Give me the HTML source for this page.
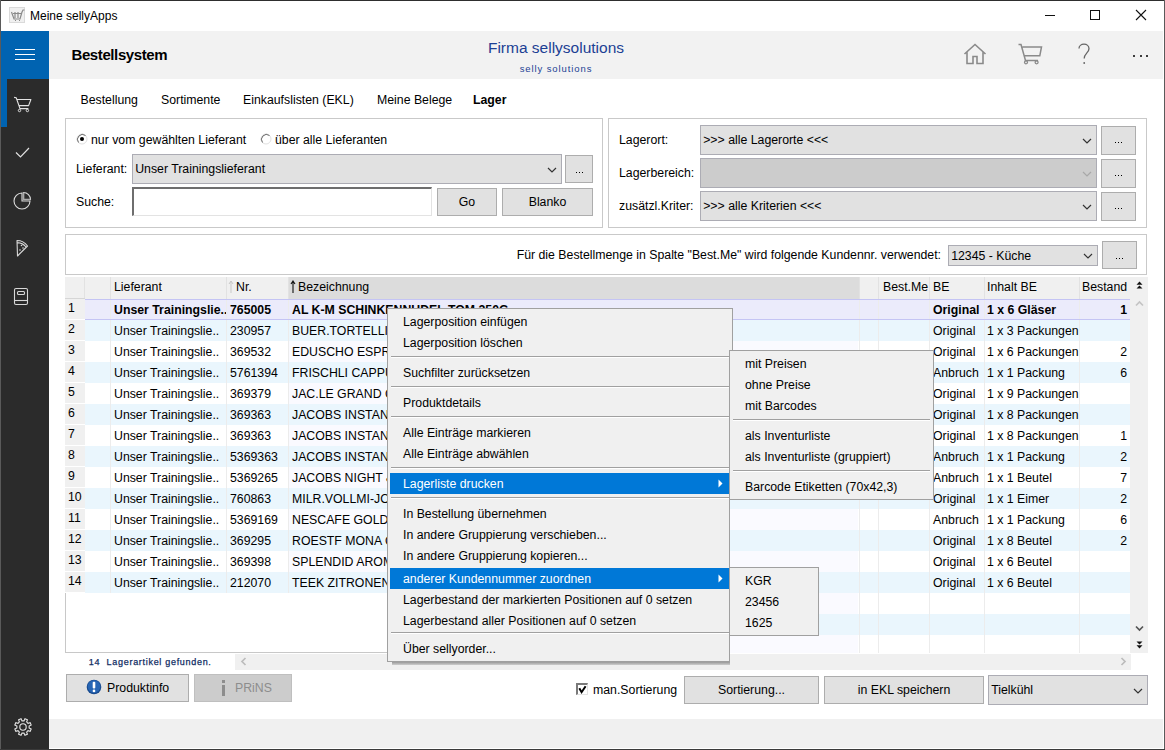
<!DOCTYPE html>
<html><head><meta charset="utf-8"><style>
html,body{margin:0;padding:0;}
body{width:1165px;height:750px;overflow:hidden;position:relative;font-family:"Liberation Sans",sans-serif;font-size:12.3px;color:#000;}
div{position:absolute;}
.t{white-space:nowrap;}
svg{overflow:visible}
</style></head><body>
<div style="left:0px;top:0px;width:1165px;height:750px;background:#ffffff"></div>
<div style="left:1px;top:31px;width:48px;height:719px;background:#2b2b2b"></div>
<div style="left:1px;top:31px;width:48px;height:48px;background:#0063b1"></div>
<div style="left:1px;top:79px;width:6px;height:48px;background:#0063b1"></div>
<div style="left:49px;top:31px;width:1114px;height:48px;background:#f2f2f2"></div>
<div style="left:49px;top:719px;width:1114px;height:29px;background:#f0f0f0"></div>
<div style="left:0px;top:0px;width:1165px;height:1px;background:#2e2e2e"></div>
<div style="left:0px;top:0px;width:1px;height:750px;background:#5a5a5a"></div>
<div style="left:1164px;top:0px;width:1px;height:750px;background:#5a5a5a"></div>
<div style="left:0px;top:749px;width:1165px;height:1px;background:#3a3a3a"></div>
<div style="left:9px;top:7px;width:16px;height:16px;background:#f0f0f0;border:1px solid #dadada;box-sizing:border-box"></div>
<svg style="position:absolute;left:9px;top:7px" width="16" height="16" viewBox="0 0 16 16" ><path d="M2.5 5 L5 12 H11 L13 5 M4 6.5 H12.5 M6 5v6 M9 5v6 M13 5 L14 3 H15.5 M6 13.5h1 M10 13.5h1" stroke="#8a8a8a" stroke-width="1.2" fill="none"/></svg>
<div class="t" style="left:30px;top:5.84px;height:20px;line-height:20px;font-size:12px;">Meine sellyApps</div>
<div style="left:1045px;top:15px;width:10px;height:1px;background:#111"></div>
<div style="left:1090px;top:10px;width:10px;height:10px;border:1px solid #111;box-sizing:border-box"></div>
<svg style="position:absolute;left:1135px;top:9px" width="12" height="12" viewBox="0 0 12 12" ><path d="M1 1L11 11M11 1L1 11" stroke="#111" stroke-width="1.1"/></svg>
<div style="left:15px;top:49px;width:20px;height:1px;background:#fff"></div>
<div style="left:15px;top:54px;width:20px;height:1px;background:#fff"></div>
<div style="left:15px;top:59px;width:20px;height:1px;background:#fff"></div>
<svg style="position:absolute;left:12px;top:94px" width="22" height="18" viewBox="0 0 22 18" ><path d="M2.1 3.4L4.2 3.8L8 14.6H16.4 M5.1 5.5H18.9L16.6 11.6H7" stroke="#e4e4e4" stroke-width="1.1" fill="none" stroke-linejoin="round"/><circle cx="7.5" cy="16.5" r="1.2" stroke="#e4e4e4" stroke-width="1" fill="none"/><circle cx="15.4" cy="16.5" r="1.2" stroke="#e4e4e4" stroke-width="1" fill="none"/></svg>
<svg style="position:absolute;left:15px;top:147px" width="16" height="12" viewBox="0 0 16 12" ><path d="M1 5.5L5.5 10L14 1" stroke="#e0e0e0" stroke-width="1.2" fill="none"/></svg>
<svg style="position:absolute;left:12px;top:189px" width="22" height="22" viewBox="0 0 22 22" ><path d="M10 4A8 8 0 1 0 18 12H10Z" stroke="#dcdcdc" stroke-width="1.1" fill="none"/><path d="M11.5 3.5A7 7 0 0 1 18.5 10.5H11.5Z" stroke="#dcdcdc" stroke-width="1.1" fill="none"/><path d="M11.5 3.5V10.5H18.5" stroke="#aaa" stroke-width="1.6" fill="none"/></svg>
<svg style="position:absolute;left:14px;top:239px" width="18" height="20" viewBox="0 0 18 20" ><path d="M3 1.5C7.5 1.5 11 3.5 13.5 7L3.5 17Z M3.3 3.6C7 3.8 10 5.3 12 8" stroke="#d8d8d8" stroke-width="1.1" fill="none" stroke-linejoin="round"/><circle cx="7.5" cy="6.5" r="0.8" fill="#d8d8d8"/><circle cx="6" cy="11" r="0.8" fill="#d8d8d8"/><circle cx="9" cy="9" r="0.8" fill="#d8d8d8"/></svg>
<svg style="position:absolute;left:13px;top:287px" width="16" height="20" viewBox="0 0 16 20" ><rect x="1.5" y="1.5" width="13" height="16" rx="1.5" stroke="#d8d8d8" stroke-width="1.1" fill="none"/><path d="M1.5 13.5H14.5" stroke="#d8d8d8" stroke-width="1.1"/><rect x="4.5" y="4.5" width="7" height="3" rx="1" stroke="#d8d8d8" stroke-width="1.1" fill="none"/></svg>
<svg style="position:absolute;left:11.5px;top:715.5px" width="22" height="22" viewBox="0 0 22 22" ><g transform="translate(11,11)" stroke="#e6e6e6" stroke-width="1.1" fill="none"><path d="M6.12 0.97 L8.17 1.96 L7.16 4.39 L5.02 3.64 L3.64 5.02 L4.39 7.16 L1.96 8.17 L0.97 6.12 L-0.97 6.12 L-1.96 8.17 L-4.39 7.16 L-3.64 5.02 L-5.02 3.64 L-7.16 4.39 L-8.17 1.96 L-6.12 0.97 L-6.12 -0.97 L-8.17 -1.96 L-7.16 -4.39 L-5.02 -3.64 L-3.64 -5.02 L-4.39 -7.16 L-1.96 -8.17 L-0.97 -6.12 L0.97 -6.12 L1.96 -8.17 L4.39 -7.16 L3.64 -5.02 L5.02 -3.64 L7.16 -4.39 L8.17 -1.96 L6.12 -0.97Z"/><circle r="3.2"/></g></svg>
<div class="t" style="left:71.5px;top:44.80px;height:20px;line-height:20px;font-size:15px;font-weight:bold;letter-spacing:-0.4px">Bestellsystem</div>
<div class="t" style="left:400px;width:312px;top:37.63px;height:20px;line-height:20px;font-size:15.5px;text-align:center;color:#1c3f94">Firma sellysolutions</div>
<div class="t" style="left:400px;width:312px;top:58.71px;height:20px;line-height:20px;font-size:9.5px;text-align:center;color:#1c3f94;letter-spacing:0.9px">selly solutions</div>
<svg style="position:absolute;left:963px;top:43px" width="24" height="22" viewBox="0 0 24 22" ><path d="M1.5 11L12 1.5L22.5 11 M4 8.5V20.5H10V13.5H14V20.5H20V8.5" stroke="#8a8a8a" stroke-width="1.6" fill="none"/></svg>
<svg style="position:absolute;left:1017px;top:43px" width="26" height="22" viewBox="0 0 26 22" ><path d="M1.5 1.5H4L8.5 17.5H21 M5.5 4H24.5L22.8 12.8H7.8" stroke="#8a8a8a" stroke-width="1.5" fill="none"/><circle cx="9" cy="19.3" r="1.5" stroke="#8a8a8a" stroke-width="1.3" fill="none"/><circle cx="19.6" cy="19.3" r="1.5" stroke="#8a8a8a" stroke-width="1.3" fill="none"/></svg>
<svg style="position:absolute;left:1077px;top:43px" width="14" height="22" viewBox="0 0 14 22" ><path d="M2 5.5C2 3 4.2 1.2 7 1.2C9.8 1.2 12 3 12 5.8C12 9.5 7.2 10.5 7.2 15.5" stroke="#666" stroke-width="1.3" fill="none"/><circle cx="7.2" cy="20" r="0.9" fill="#666"/></svg>
<div style="left:1133px;top:55.4px;width:2px;height:2px;background:#000;border-radius:1px"></div>
<div style="left:1139.5px;top:55.4px;width:2px;height:2px;background:#000;border-radius:1px"></div>
<div style="left:1146px;top:55.4px;width:2px;height:2px;background:#000;border-radius:1px"></div>
<div class="t" style="left:80.5px;top:89.74px;height:20px;line-height:20px;font-size:12.3px;">Bestellung</div>
<div class="t" style="left:161px;top:89.74px;height:20px;line-height:20px;font-size:12.3px;">Sortimente</div>
<div class="t" style="left:243px;top:89.74px;height:20px;line-height:20px;font-size:12.3px;">Einkaufslisten (EKL)</div>
<div class="t" style="left:377px;top:89.74px;height:20px;line-height:20px;font-size:12.3px;">Meine Belege</div>
<div class="t" style="left:473px;top:89.74px;height:20px;line-height:20px;font-size:12.3px;font-weight:bold">Lager</div>
<div style="left:65px;top:118px;width:538px;height:110px;border:1px solid #c9c9c9;box-sizing:border-box"></div>
<svg style="position:absolute;left:76px;top:133px" width="12" height="12" viewBox="0 0 12 12" ><circle cx="6" cy="6" r="5" fill="#fff" stroke="#e0e0e0" stroke-width="1"/><path d="M9.5 2.5A5 5 0 0 0 2.5 9.5" stroke="#6a6a6a" stroke-width="1" fill="none"/><circle cx="6" cy="6" r="2" fill="#000"/></svg>
<div class="t" style="left:91px;top:129.74px;height:20px;line-height:20px;font-size:12.3px;">nur vom gewählten Lieferant</div>
<svg style="position:absolute;left:260px;top:133px" width="12" height="12" viewBox="0 0 12 12" ><circle cx="6" cy="6" r="5" fill="#fff" stroke="#e0e0e0" stroke-width="1"/><path d="M9.5 2.5A5 5 0 0 0 2.5 9.5" stroke="#6a6a6a" stroke-width="1" fill="none"/></svg>
<div class="t" style="left:275px;top:129.74px;height:20px;line-height:20px;font-size:12.3px;">über alle Lieferanten</div>
<div class="t" style="left:76px;top:158.74px;height:20px;line-height:20px;font-size:12.3px;">Lieferant:</div>
<div style="left:132px;top:154px;width:430px;height:30px;border:1px solid #acacb4;background:#e1e1e1;box-sizing:border-box"></div>
<svg style="position:absolute;left:547px;top:167px" width="10" height="6" viewBox="0 0 10 6" ><path d="M1 1L5 5L9 1" stroke="#333" stroke-width="1.2" fill="none"/></svg>
<div class="t" style="left:135.2px;top:159.24px;height:20px;line-height:20px;font-size:12.3px;">Unser Trainingslieferant</div>
<div style="left:565px;top:155px;width:28px;height:28px;border:1px solid #adadad;background:#e1e1e1;box-sizing:border-box"></div>
<div style="left:576px;top:172px;width:1px;height:1px;background:#000"></div>
<div style="left:579px;top:172px;width:1px;height:1px;background:#000"></div>
<div style="left:582px;top:172px;width:1px;height:1px;background:#000"></div>
<div class="t" style="left:76px;top:191.74px;height:20px;line-height:20px;font-size:12.3px;">Suche:</div>
<div style="left:132px;top:187px;width:300px;height:29px;border-top:2px solid #6e6e6e;border-left:2px solid #6e6e6e;border-bottom:1px solid #e3e3e3;border-right:1px solid #e3e3e3;background:#fff;box-sizing:border-box"></div>
<div style="left:437px;top:188px;width:60px;height:28px;border:1px solid #adadad;background:#e1e1e1;box-sizing:border-box"></div>
<div class="t" style="left:437px;width:60px;top:192.24px;height:20px;line-height:20px;font-size:12.3px;text-align:center;">Go</div>
<div style="left:502px;top:188px;width:91px;height:28px;border:1px solid #adadad;background:#e1e1e1;box-sizing:border-box"></div>
<div class="t" style="left:502px;width:91px;top:192.24px;height:20px;line-height:20px;font-size:12.3px;text-align:center;">Blanko</div>
<div style="left:608px;top:118px;width:539px;height:110px;border:1px solid #c9c9c9;box-sizing:border-box"></div>
<div class="t" style="left:619px;top:129.74px;height:20px;line-height:20px;font-size:12.3px;">Lagerort:</div>
<div class="t" style="left:619px;top:162.74px;height:20px;line-height:20px;font-size:12.3px;">Lagerbereich:</div>
<div class="t" style="left:619px;top:195.74px;height:20px;line-height:20px;font-size:12.3px;">zusätzl.Kriter:</div>
<div style="left:700px;top:125px;width:397px;height:30px;border:1px solid #acacb4;background:#e1e1e1;box-sizing:border-box"></div>
<svg style="position:absolute;left:1082px;top:138px" width="10" height="6" viewBox="0 0 10 6" ><path d="M1 1L5 5L9 1" stroke="#333" stroke-width="1.2" fill="none"/></svg>
<div class="t" style="left:703.2px;top:130.24px;height:20px;line-height:20px;font-size:12.3px;">&gt;&gt;&gt; alle Lagerorte &lt;&lt;&lt;</div>
<div style="left:700px;top:158px;width:397px;height:30px;border:1px solid #acacb4;background:#cccccc;box-sizing:border-box"></div>
<svg style="position:absolute;left:1082px;top:171px" width="10" height="6" viewBox="0 0 10 6" ><path d="M1 1L5 5L9 1" stroke="#a8a8a8" stroke-width="1.2" fill="none"/></svg>
<div style="left:700px;top:191px;width:397px;height:30px;border:1px solid #acacb4;background:#e1e1e1;box-sizing:border-box"></div>
<svg style="position:absolute;left:1082px;top:204px" width="10" height="6" viewBox="0 0 10 6" ><path d="M1 1L5 5L9 1" stroke="#333" stroke-width="1.2" fill="none"/></svg>
<div class="t" style="left:703.2px;top:196.24px;height:20px;line-height:20px;font-size:12.3px;">&gt;&gt;&gt; alle Kriterien &lt;&lt;&lt;</div>
<div style="left:1101px;top:126px;width:35px;height:29px;border:1px solid #adadad;background:#e1e1e1;box-sizing:border-box"></div>
<div style="left:1115px;top:142px;width:1px;height:1px;background:#000"></div>
<div style="left:1118px;top:142px;width:1px;height:1px;background:#000"></div>
<div style="left:1121px;top:142px;width:1px;height:1px;background:#000"></div>
<div style="left:1101px;top:159px;width:35px;height:29px;border:1px solid #adadad;background:#e1e1e1;box-sizing:border-box"></div>
<div style="left:1115px;top:175px;width:1px;height:1px;background:#000"></div>
<div style="left:1118px;top:175px;width:1px;height:1px;background:#000"></div>
<div style="left:1121px;top:175px;width:1px;height:1px;background:#000"></div>
<div style="left:1101px;top:192px;width:35px;height:29px;border:1px solid #adadad;background:#e1e1e1;box-sizing:border-box"></div>
<div style="left:1115px;top:208px;width:1px;height:1px;background:#000"></div>
<div style="left:1118px;top:208px;width:1px;height:1px;background:#000"></div>
<div style="left:1121px;top:208px;width:1px;height:1px;background:#000"></div>
<div style="left:65px;top:234px;width:1082px;height:41px;border:1px solid #c9c9c9;box-sizing:border-box"></div>
<div class="t" style="right:224px;top:244.74px;height:20px;line-height:20px;font-size:12.3px;text-align:right;">Für die Bestellmenge in Spalte "Best.Me" wird folgende Kundennr. verwendet:</div>
<div style="left:948px;top:245px;width:150px;height:21px;border:1px solid #acacb4;background:#e1e1e1;box-sizing:border-box"></div>
<svg style="position:absolute;left:1083px;top:253px" width="10" height="6" viewBox="0 0 10 6" ><path d="M1 1L5 5L9 1" stroke="#333" stroke-width="1.2" fill="none"/></svg>
<div class="t" style="left:951.2px;top:245.74px;height:20px;line-height:20px;font-size:12.3px;">12345 - Küche</div>
<div style="left:1102px;top:241px;width:35px;height:28px;border:1px solid #adadad;background:#e1e1e1;box-sizing:border-box"></div>
<div style="left:1116px;top:258px;width:1px;height:1px;background:#000"></div>
<div style="left:1119px;top:258px;width:1px;height:1px;background:#000"></div>
<div style="left:1122px;top:258px;width:1px;height:1px;background:#000"></div>
<div style="left:65px;top:277px;width:1065px;height:22px;background:#f0f0f0"></div>
<div style="left:288px;top:277px;width:571px;height:22px;background:#dcdcdc"></div>
<div style="left:84px;top:277px;width:1px;height:22px;background:#e2e2e2"></div>
<div style="left:110px;top:277px;width:1px;height:22px;background:#e2e2e2"></div>
<div style="left:226px;top:277px;width:1px;height:22px;background:#e2e2e2"></div>
<div style="left:288px;top:277px;width:1px;height:22px;background:#e2e2e2"></div>
<div style="left:859px;top:277px;width:1px;height:22px;background:#e2e2e2"></div>
<div style="left:878px;top:277px;width:1px;height:22px;background:#e2e2e2"></div>
<div style="left:929px;top:277px;width:1px;height:22px;background:#e2e2e2"></div>
<div style="left:984px;top:277px;width:1px;height:22px;background:#e2e2e2"></div>
<div style="left:1079px;top:277px;width:1px;height:22px;background:#e2e2e2"></div>
<div class="t" style="left:114px;top:276.74px;height:20px;line-height:20px;font-size:12.3px;">Lieferant</div>
<div class="t" style="left:236px;top:276.74px;height:20px;line-height:20px;font-size:12.3px;">Nr.</div>
<div class="t" style="left:298px;top:276.74px;height:20px;line-height:20px;font-size:12.3px;">Bezeichnung</div>
<div class="t" style="left:883px;top:276.74px;height:20px;line-height:20px;font-size:12.3px;">Best.Me</div>
<div class="t" style="left:933px;top:276.74px;height:20px;line-height:20px;font-size:12.3px;">BE</div>
<div class="t" style="left:987px;top:276.74px;height:20px;line-height:20px;font-size:12.3px;">Inhalt BE</div>
<div class="t" style="left:1082px;top:276.74px;height:20px;line-height:20px;font-size:12.3px;">Bestand</div>
<svg style="position:absolute;left:228px;top:280px" width="6" height="14" viewBox="0 0 6 14" ><path d="M3 1V13 M1 4L3 1L5 4" stroke="#c8c8c8" stroke-width="1" fill="none"/></svg>
<svg style="position:absolute;left:290px;top:280px" width="6" height="14" viewBox="0 0 6 14" ><path d="M3 1V13 M1 4L3 1L5 4" stroke="#111" stroke-width="1.1" fill="none"/></svg>
<div style="left:85px;top:299px;width:1045px;height:21px;background:#ebebfb"></div>
<div style="left:65px;top:299px;width:20px;height:20px;background:#f0f0f0"></div>
<div class="t" style="left:68px;top:297.54px;height:20px;line-height:20px;font-size:12.3px;">1</div>
<div class="t" style="left:114px;top:299.74px;height:20px;line-height:20px;font-size:12.3px;font-weight:bold">Unser Trainingslie..</div>
<div class="t" style="left:230px;top:299.74px;height:20px;line-height:20px;font-size:12.3px;font-weight:bold">765005</div>
<div class="t" style="left:292px;top:299.74px;height:20px;line-height:20px;font-size:12.3px;font-weight:bold">AL K-M SCHINKENNUDEL TOM 250G</div>
<div class="t" style="left:933px;top:299.74px;height:20px;line-height:20px;font-size:12.3px;font-weight:bold">Original</div>
<div class="t" style="left:987px;top:299.74px;height:20px;line-height:20px;font-size:12.3px;font-weight:bold">1 x 6 Gläser</div>
<div class="t" style="right:38px;top:299.74px;height:20px;line-height:20px;font-size:12.3px;text-align:right;font-weight:bold">1</div>
<div style="left:85px;top:320px;width:1045px;height:21px;background:#eaf6fd"></div>
<div style="left:65px;top:320px;width:20px;height:20px;background:#f0f0f0"></div>
<div class="t" style="left:68px;top:318.54px;height:20px;line-height:20px;font-size:12.3px;">2</div>
<div class="t" style="left:114px;top:320.74px;height:20px;line-height:20px;font-size:12.3px;">Unser Trainingslie..</div>
<div class="t" style="left:230px;top:320.74px;height:20px;line-height:20px;font-size:12.3px;">230957</div>
<div class="t" style="left:292px;top:320.74px;height:20px;line-height:20px;font-size:12.3px;">BUER.TORTELLINI RICOTTA</div>
<div class="t" style="left:933px;top:320.74px;height:20px;line-height:20px;font-size:12.3px;">Original</div>
<div class="t" style="left:987px;top:320.74px;height:20px;line-height:20px;font-size:12.3px;">1 x 3 Packungen</div>
<div style="left:85px;top:341px;width:1045px;height:21px;background:#ffffff"></div>
<div style="left:288px;top:341px;width:570px;height:21px;background:#fafaff"></div>
<div style="left:65px;top:341px;width:20px;height:20px;background:#f0f0f0"></div>
<div class="t" style="left:68px;top:339.54px;height:20px;line-height:20px;font-size:12.3px;">3</div>
<div class="t" style="left:114px;top:341.74px;height:20px;line-height:20px;font-size:12.3px;">Unser Trainingslie..</div>
<div class="t" style="left:230px;top:341.74px;height:20px;line-height:20px;font-size:12.3px;">369532</div>
<div class="t" style="left:292px;top:341.74px;height:20px;line-height:20px;font-size:12.3px;">EDUSCHO ESPRESSO</div>
<div class="t" style="left:933px;top:341.74px;height:20px;line-height:20px;font-size:12.3px;">Original</div>
<div class="t" style="left:987px;top:341.74px;height:20px;line-height:20px;font-size:12.3px;">1 x 6 Packungen</div>
<div class="t" style="right:38px;top:341.74px;height:20px;line-height:20px;font-size:12.3px;text-align:right;">2</div>
<div style="left:85px;top:362px;width:1045px;height:21px;background:#eaf6fd"></div>
<div style="left:65px;top:362px;width:20px;height:20px;background:#f0f0f0"></div>
<div class="t" style="left:68px;top:360.54px;height:20px;line-height:20px;font-size:12.3px;">4</div>
<div class="t" style="left:114px;top:362.74px;height:20px;line-height:20px;font-size:12.3px;">Unser Trainingslie..</div>
<div class="t" style="left:230px;top:362.74px;height:20px;line-height:20px;font-size:12.3px;">5761394</div>
<div class="t" style="left:292px;top:362.74px;height:20px;line-height:20px;font-size:12.3px;">FRISCHLI CAPPUCCINO</div>
<div class="t" style="left:933px;top:362.74px;height:20px;line-height:20px;font-size:12.3px;">Anbruch</div>
<div class="t" style="left:987px;top:362.74px;height:20px;line-height:20px;font-size:12.3px;">1 x 1 Packung</div>
<div class="t" style="right:38px;top:362.74px;height:20px;line-height:20px;font-size:12.3px;text-align:right;">6</div>
<div style="left:85px;top:383px;width:1045px;height:21px;background:#ffffff"></div>
<div style="left:288px;top:383px;width:570px;height:21px;background:#fafaff"></div>
<div style="left:65px;top:383px;width:20px;height:20px;background:#f0f0f0"></div>
<div class="t" style="left:68px;top:381.54px;height:20px;line-height:20px;font-size:12.3px;">5</div>
<div class="t" style="left:114px;top:383.74px;height:20px;line-height:20px;font-size:12.3px;">Unser Trainingslie..</div>
<div class="t" style="left:230px;top:383.74px;height:20px;line-height:20px;font-size:12.3px;">369379</div>
<div class="t" style="left:292px;top:383.74px;height:20px;line-height:20px;font-size:12.3px;">JAC.LE GRAND CAFE</div>
<div class="t" style="left:933px;top:383.74px;height:20px;line-height:20px;font-size:12.3px;">Original</div>
<div class="t" style="left:987px;top:383.74px;height:20px;line-height:20px;font-size:12.3px;">1 x 9 Packungen</div>
<div style="left:85px;top:404px;width:1045px;height:21px;background:#eaf6fd"></div>
<div style="left:65px;top:404px;width:20px;height:20px;background:#f0f0f0"></div>
<div class="t" style="left:68px;top:402.54px;height:20px;line-height:20px;font-size:12.3px;">6</div>
<div class="t" style="left:114px;top:404.74px;height:20px;line-height:20px;font-size:12.3px;">Unser Trainingslie..</div>
<div class="t" style="left:230px;top:404.74px;height:20px;line-height:20px;font-size:12.3px;">369363</div>
<div class="t" style="left:292px;top:404.74px;height:20px;line-height:20px;font-size:12.3px;">JACOBS INSTANT</div>
<div class="t" style="left:933px;top:404.74px;height:20px;line-height:20px;font-size:12.3px;">Original</div>
<div class="t" style="left:987px;top:404.74px;height:20px;line-height:20px;font-size:12.3px;">1 x 8 Packungen</div>
<div style="left:85px;top:425px;width:1045px;height:21px;background:#ffffff"></div>
<div style="left:288px;top:425px;width:570px;height:21px;background:#fafaff"></div>
<div style="left:65px;top:425px;width:20px;height:20px;background:#f0f0f0"></div>
<div class="t" style="left:68px;top:423.54px;height:20px;line-height:20px;font-size:12.3px;">7</div>
<div class="t" style="left:114px;top:425.74px;height:20px;line-height:20px;font-size:12.3px;">Unser Trainingslie..</div>
<div class="t" style="left:230px;top:425.74px;height:20px;line-height:20px;font-size:12.3px;">369363</div>
<div class="t" style="left:292px;top:425.74px;height:20px;line-height:20px;font-size:12.3px;">JACOBS INSTANT</div>
<div class="t" style="left:933px;top:425.74px;height:20px;line-height:20px;font-size:12.3px;">Original</div>
<div class="t" style="left:987px;top:425.74px;height:20px;line-height:20px;font-size:12.3px;">1 x 8 Packungen</div>
<div class="t" style="right:38px;top:425.74px;height:20px;line-height:20px;font-size:12.3px;text-align:right;">1</div>
<div style="left:85px;top:446px;width:1045px;height:21px;background:#eaf6fd"></div>
<div style="left:65px;top:446px;width:20px;height:20px;background:#f0f0f0"></div>
<div class="t" style="left:68px;top:444.54px;height:20px;line-height:20px;font-size:12.3px;">8</div>
<div class="t" style="left:114px;top:446.74px;height:20px;line-height:20px;font-size:12.3px;">Unser Trainingslie..</div>
<div class="t" style="left:230px;top:446.74px;height:20px;line-height:20px;font-size:12.3px;">5369363</div>
<div class="t" style="left:292px;top:446.74px;height:20px;line-height:20px;font-size:12.3px;">JACOBS INSTANT</div>
<div class="t" style="left:933px;top:446.74px;height:20px;line-height:20px;font-size:12.3px;">Anbruch</div>
<div class="t" style="left:987px;top:446.74px;height:20px;line-height:20px;font-size:12.3px;">1 x 1 Packung</div>
<div class="t" style="right:38px;top:446.74px;height:20px;line-height:20px;font-size:12.3px;text-align:right;">2</div>
<div style="left:85px;top:467px;width:1045px;height:21px;background:#ffffff"></div>
<div style="left:288px;top:467px;width:570px;height:21px;background:#fafaff"></div>
<div style="left:65px;top:467px;width:20px;height:20px;background:#f0f0f0"></div>
<div class="t" style="left:68px;top:465.54px;height:20px;line-height:20px;font-size:12.3px;">9</div>
<div class="t" style="left:114px;top:467.74px;height:20px;line-height:20px;font-size:12.3px;">Unser Trainingslie..</div>
<div class="t" style="left:230px;top:467.74px;height:20px;line-height:20px;font-size:12.3px;">5369265</div>
<div class="t" style="left:292px;top:467.74px;height:20px;line-height:20px;font-size:12.3px;">JACOBS NIGHT &amp; DAY</div>
<div class="t" style="left:933px;top:467.74px;height:20px;line-height:20px;font-size:12.3px;">Anbruch</div>
<div class="t" style="left:987px;top:467.74px;height:20px;line-height:20px;font-size:12.3px;">1 x 1 Beutel</div>
<div class="t" style="right:38px;top:467.74px;height:20px;line-height:20px;font-size:12.3px;text-align:right;">7</div>
<div style="left:85px;top:488px;width:1045px;height:21px;background:#eaf6fd"></div>
<div style="left:65px;top:488px;width:20px;height:20px;background:#f0f0f0"></div>
<div class="t" style="left:68px;top:486.54px;height:20px;line-height:20px;font-size:12.3px;">10</div>
<div class="t" style="left:114px;top:488.74px;height:20px;line-height:20px;font-size:12.3px;">Unser Trainingslie..</div>
<div class="t" style="left:230px;top:488.74px;height:20px;line-height:20px;font-size:12.3px;">760863</div>
<div class="t" style="left:292px;top:488.74px;height:20px;line-height:20px;font-size:12.3px;">MILR.VOLLMI-JOGHURT</div>
<div class="t" style="left:933px;top:488.74px;height:20px;line-height:20px;font-size:12.3px;">Original</div>
<div class="t" style="left:987px;top:488.74px;height:20px;line-height:20px;font-size:12.3px;">1 x 1 Eimer</div>
<div class="t" style="right:38px;top:488.74px;height:20px;line-height:20px;font-size:12.3px;text-align:right;">2</div>
<div style="left:85px;top:509px;width:1045px;height:21px;background:#ffffff"></div>
<div style="left:288px;top:509px;width:570px;height:21px;background:#fafaff"></div>
<div style="left:65px;top:509px;width:20px;height:20px;background:#f0f0f0"></div>
<div class="t" style="left:68px;top:507.54px;height:20px;line-height:20px;font-size:12.3px;">11</div>
<div class="t" style="left:114px;top:509.74px;height:20px;line-height:20px;font-size:12.3px;">Unser Trainingslie..</div>
<div class="t" style="left:230px;top:509.74px;height:20px;line-height:20px;font-size:12.3px;">5369169</div>
<div class="t" style="left:292px;top:509.74px;height:20px;line-height:20px;font-size:12.3px;">NESCAFE GOLD</div>
<div class="t" style="left:933px;top:509.74px;height:20px;line-height:20px;font-size:12.3px;">Anbruch</div>
<div class="t" style="left:987px;top:509.74px;height:20px;line-height:20px;font-size:12.3px;">1 x 1 Packung</div>
<div class="t" style="right:38px;top:509.74px;height:20px;line-height:20px;font-size:12.3px;text-align:right;">6</div>
<div style="left:85px;top:530px;width:1045px;height:21px;background:#eaf6fd"></div>
<div style="left:65px;top:530px;width:20px;height:20px;background:#f0f0f0"></div>
<div class="t" style="left:68px;top:528.54px;height:20px;line-height:20px;font-size:12.3px;">12</div>
<div class="t" style="left:114px;top:530.74px;height:20px;line-height:20px;font-size:12.3px;">Unser Trainingslie..</div>
<div class="t" style="left:230px;top:530.74px;height:20px;line-height:20px;font-size:12.3px;">369295</div>
<div class="t" style="left:292px;top:530.74px;height:20px;line-height:20px;font-size:12.3px;">ROESTF MONA GOLD</div>
<div class="t" style="left:933px;top:530.74px;height:20px;line-height:20px;font-size:12.3px;">Original</div>
<div class="t" style="left:987px;top:530.74px;height:20px;line-height:20px;font-size:12.3px;">1 x 8 Beutel</div>
<div class="t" style="right:38px;top:530.74px;height:20px;line-height:20px;font-size:12.3px;text-align:right;">2</div>
<div style="left:85px;top:551px;width:1045px;height:21px;background:#ffffff"></div>
<div style="left:288px;top:551px;width:570px;height:21px;background:#fafaff"></div>
<div style="left:65px;top:551px;width:20px;height:20px;background:#f0f0f0"></div>
<div class="t" style="left:68px;top:549.54px;height:20px;line-height:20px;font-size:12.3px;">13</div>
<div class="t" style="left:114px;top:551.74px;height:20px;line-height:20px;font-size:12.3px;">Unser Trainingslie..</div>
<div class="t" style="left:230px;top:551.74px;height:20px;line-height:20px;font-size:12.3px;">369398</div>
<div class="t" style="left:292px;top:551.74px;height:20px;line-height:20px;font-size:12.3px;">SPLENDID AROMA</div>
<div class="t" style="left:933px;top:551.74px;height:20px;line-height:20px;font-size:12.3px;">Original</div>
<div class="t" style="left:987px;top:551.74px;height:20px;line-height:20px;font-size:12.3px;">1 x 6 Beutel</div>
<div style="left:85px;top:572px;width:1045px;height:21px;background:#eaf6fd"></div>
<div style="left:65px;top:572px;width:20px;height:20px;background:#f0f0f0"></div>
<div class="t" style="left:68px;top:570.54px;height:20px;line-height:20px;font-size:12.3px;">14</div>
<div class="t" style="left:114px;top:572.74px;height:20px;line-height:20px;font-size:12.3px;">Unser Trainingslie..</div>
<div class="t" style="left:230px;top:572.74px;height:20px;line-height:20px;font-size:12.3px;">212070</div>
<div class="t" style="left:292px;top:572.74px;height:20px;line-height:20px;font-size:12.3px;">TEEK ZITRONENTEE</div>
<div class="t" style="left:933px;top:572.74px;height:20px;line-height:20px;font-size:12.3px;">Original</div>
<div class="t" style="left:987px;top:572.74px;height:20px;line-height:20px;font-size:12.3px;">1 x 6 Beutel</div>
<div style="left:729px;top:593px;width:401px;height:21px;background:#ffffff"></div>
<div style="left:729px;top:593px;width:129px;height:21px;background:#fafaff"></div>
<div style="left:729px;top:614px;width:401px;height:21px;background:#eaf6fd"></div>
<div style="left:729px;top:635px;width:401px;height:18px;background:#ffffff"></div>
<div style="left:729px;top:635px;width:129px;height:18px;background:#fafaff"></div>
<div style="left:110px;top:299px;width:1px;height:294px;background:#ececec"></div>
<div style="left:226px;top:299px;width:1px;height:294px;background:#ececec"></div>
<div style="left:288px;top:299px;width:1px;height:294px;background:#ececec"></div>
<div style="left:859px;top:299px;width:1px;height:354px;background:#ececec"></div>
<div style="left:878px;top:299px;width:1px;height:354px;background:#ececec"></div>
<div style="left:929px;top:299px;width:1px;height:354px;background:#ececec"></div>
<div style="left:984px;top:299px;width:1px;height:354px;background:#ececec"></div>
<div style="left:1079px;top:299px;width:1px;height:354px;background:#ececec"></div>
<div style="left:85px;top:299px;width:1045px;height:1px;background:#c4c4f4"></div>
<div style="left:85px;top:319px;width:1045px;height:1px;background:#c4c4f4"></div>
<div style="left:65px;top:298px;width:20px;height:1px;background:#d6d6d6"></div>
<div style="left:65px;top:652px;width:664px;height:1px;background:#c8c8c8"></div>
<div style="left:65px;top:593px;width:1px;height:60px;background:#c8c8c8"></div>
<div style="left:1130px;top:277px;width:18px;height:376px;background:#f0f0f0"></div>
<svg style="position:absolute;left:1136px;top:281px" width="7" height="8" viewBox="0 0 7 8" ><path d="M0.5 3.8L3.5 0.6L6.5 3.8Z M0.5 7.6L3.5 4.4L6.5 7.6Z" fill="#111"/></svg>
<svg style="position:absolute;left:1135px;top:299.5px" width="9" height="7" viewBox="0 0 9 7" ><path d="M1 5.5L4.5 2L8 5.5" stroke="#c4c4c4" stroke-width="1.7" fill="none"/></svg>
<svg style="position:absolute;left:1135px;top:624.5px" width="9" height="7" viewBox="0 0 9 7" ><path d="M1 1.5L4.5 5L8 1.5" stroke="#555" stroke-width="1.7" fill="none"/></svg>
<svg style="position:absolute;left:1136px;top:640.5px" width="7" height="8" viewBox="0 0 7 8" ><path d="M0.5 0.4L3.5 3.6L6.5 0.4Z M0.5 4.2L3.5 7.4L6.5 4.2Z" fill="#111"/></svg>
<div style="left:235px;top:654px;width:896px;height:16px;background:#f0f0f0"></div>
<svg style="position:absolute;left:239.5px;top:657px" width="7" height="9" viewBox="0 0 7 9" ><path d="M5.5 1L2 4.5L5.5 8" stroke="#bcbcbc" stroke-width="1.7" fill="none"/></svg>
<svg style="position:absolute;left:1119.5px;top:657px" width="7" height="9" viewBox="0 0 7 9" ><path d="M1.5 1L5 4.5L1.5 8" stroke="#bcbcbc" stroke-width="1.7" fill="none"/></svg>
<div class="t" style="left:88.8px;top:651.88px;height:20px;line-height:20px;font-size:9px;color:#0f2c63;letter-spacing:0.7px;-webkit-text-stroke:0.25px #0f2c63">14&nbsp; Lagerartikel gefunden.</div>
<div style="left:66px;top:674px;width:123px;height:28px;border:1px solid #adadad;background:#e1e1e1;box-sizing:border-box"></div>
<svg style="position:absolute;left:85.6px;top:678.7px" width="16" height="16" viewBox="0 0 16 16" ><circle cx="8" cy="8" r="7.3" fill="#174a8f"/><circle cx="8" cy="7.5" r="6.3" fill="#2765b4"/><rect x="6.7" y="2.8" width="2.6" height="6.7" rx="1" fill="#fff"/><circle cx="8" cy="11.9" r="1.35" fill="#fff"/></svg>
<div class="t" style="left:107px;top:677.74px;height:20px;line-height:20px;font-size:12.3px;">Produktinfo</div>
<div style="left:194px;top:674px;width:98px;height:28px;border:1px solid #bfbfbf;background:#cccccc;box-sizing:border-box"></div>
<div style="left:222px;top:680px;width:3px;height:3px;background:#8d8d8d"></div>
<div style="left:222px;top:685px;width:3px;height:11px;background:#8d8d8d"></div>
<div class="t" style="left:235px;top:677.74px;height:20px;line-height:20px;font-size:12.3px;color:#8d8d8d">PRiNS</div>
<div style="left:576px;top:683px;width:12px;height:12px;border-top:2px solid #7a7a7a;border-left:2px solid #7a7a7a;border-right:1px solid #e3e3e3;border-bottom:1px solid #e3e3e3;background:#fff;box-sizing:border-box"></div>
<svg style="position:absolute;left:576px;top:683px" width="12" height="12" viewBox="0 0 12 12" ><path d="M3.3 5.2L5.6 9.2L9.6 3.2" stroke="#000" stroke-width="2" fill="none"/></svg>
<div class="t" style="left:593px;top:679.74px;height:20px;line-height:20px;font-size:12.3px;">man.Sortierung</div>
<div style="left:684px;top:676px;width:135px;height:28px;border:1px solid #adadad;background:#e1e1e1;box-sizing:border-box"></div>
<div class="t" style="left:684px;width:135px;top:680.24px;height:20px;line-height:20px;font-size:12.3px;text-align:center;">Sortierung...</div>
<div style="left:824px;top:676px;width:160px;height:28px;border:1px solid #adadad;background:#e1e1e1;box-sizing:border-box"></div>
<div class="t" style="left:824px;width:160px;top:680.24px;height:20px;line-height:20px;font-size:12.3px;text-align:center;">in EKL speichern</div>
<div style="left:988px;top:675px;width:160px;height:30px;border:1px solid #acacb4;background:#e1e1e1;box-sizing:border-box"></div>
<svg style="position:absolute;left:1133px;top:688px" width="10" height="6" viewBox="0 0 10 6" ><path d="M1 1L5 5L9 1" stroke="#333" stroke-width="1.2" fill="none"/></svg>
<div class="t" style="left:991.2px;top:680.24px;height:20px;line-height:20px;font-size:12.3px;">Tielkühl</div>
<div style="left:387px;top:308px;width:346px;height:43px;background:#f0f0f0;border:1px solid #a0a0a0;border-bottom:none;box-sizing:border-box"></div>
<div style="left:392px;top:662px;width:338px;height:3px;background:linear-gradient(#8a8a8a,#c8c8c8);opacity:0.85"></div>
<div style="left:387px;top:308px;width:343px;height:354px;background:#f0f0f0;border:1px solid #a0a0a0;box-sizing:border-box"></div>
<div style="left:729px;top:309px;width:3px;height:41px;background:#f0f0f0"></div>
<div style="left:391px;top:356px;width:338px;height:1px;background:#a0a0a0"></div>
<div style="left:391px;top:357px;width:338px;height:1px;background:#ffffff"></div>
<div style="left:391px;top:386px;width:338px;height:1px;background:#a0a0a0"></div>
<div style="left:391px;top:387px;width:338px;height:1px;background:#ffffff"></div>
<div style="left:391px;top:416px;width:338px;height:1px;background:#a0a0a0"></div>
<div style="left:391px;top:417px;width:338px;height:1px;background:#ffffff"></div>
<div style="left:391px;top:467px;width:338px;height:1px;background:#a0a0a0"></div>
<div style="left:391px;top:468px;width:338px;height:1px;background:#ffffff"></div>
<div style="left:391px;top:497px;width:338px;height:1px;background:#a0a0a0"></div>
<div style="left:391px;top:498px;width:338px;height:1px;background:#ffffff"></div>
<div style="left:391px;top:632px;width:338px;height:1px;background:#a0a0a0"></div>
<div style="left:391px;top:633px;width:338px;height:1px;background:#ffffff"></div>
<div style="left:390px;top:473px;width:339px;height:21px;background:#0078d7"></div>
<div style="left:390px;top:568px;width:339px;height:21px;background:#0078d7"></div>
<div class="t" style="left:403px;top:311.74px;height:20px;line-height:20px;font-size:12.3px;">Lagerposition einfügen</div>
<div class="t" style="left:403px;top:332.74px;height:20px;line-height:20px;font-size:12.3px;">Lagerposition löschen</div>
<div class="t" style="left:403px;top:362.74px;height:20px;line-height:20px;font-size:12.3px;">Suchfilter zurücksetzen</div>
<div class="t" style="left:403px;top:392.74px;height:20px;line-height:20px;font-size:12.3px;">Produktdetails</div>
<div class="t" style="left:403px;top:422.74px;height:20px;line-height:20px;font-size:12.3px;">Alle Einträge markieren</div>
<div class="t" style="left:403px;top:443.74px;height:20px;line-height:20px;font-size:12.3px;">Alle Einträge abwählen</div>
<div class="t" style="left:403px;top:503.74px;height:20px;line-height:20px;font-size:12.3px;">In Bestellung übernehmen</div>
<div class="t" style="left:403px;top:524.74px;height:20px;line-height:20px;font-size:12.3px;">In andere Gruppierung verschieben...</div>
<div class="t" style="left:403px;top:545.74px;height:20px;line-height:20px;font-size:12.3px;">In andere Gruppierung kopieren...</div>
<div class="t" style="left:403px;top:589.74px;height:20px;line-height:20px;font-size:12.3px;">Lagerbestand der markierten Positionen auf 0 setzen</div>
<div class="t" style="left:403px;top:610.74px;height:20px;line-height:20px;font-size:12.3px;">Lagerbestand aller Positionen auf 0 setzen</div>
<div class="t" style="left:403px;top:638.74px;height:20px;line-height:20px;font-size:12.3px;">Über sellyorder...</div>
<div class="t" style="left:403px;top:473.74px;height:20px;line-height:20px;font-size:12.3px;color:#fff">Lagerliste drucken</div>
<div class="t" style="left:403px;top:568.74px;height:20px;line-height:20px;font-size:12.3px;color:#fff">anderer Kundennummer zuordnen</div>
<svg style="position:absolute;left:718px;top:479px" width="5" height="9" viewBox="0 0 5 9" ><path d="M0.5 0.5L4.5 4.5L0.5 8.5Z" fill="#fff"/></svg>
<svg style="position:absolute;left:718px;top:574px" width="5" height="9" viewBox="0 0 5 9" ><path d="M0.5 0.5L4.5 4.5L0.5 8.5Z" fill="#fff"/></svg>
<div style="left:729px;top:350px;width:205px;height:150px;background:#f0f0f0;border:1px solid #a0a0a0;box-sizing:border-box"></div>
<div class="t" style="left:745px;top:353.74px;height:20px;line-height:20px;font-size:12.3px;">mit Preisen</div>
<div class="t" style="left:745px;top:374.74px;height:20px;line-height:20px;font-size:12.3px;">ohne Preise</div>
<div class="t" style="left:745px;top:395.74px;height:20px;line-height:20px;font-size:12.3px;">mit Barcodes</div>
<div class="t" style="left:745px;top:425.74px;height:20px;line-height:20px;font-size:12.3px;">als Inventurliste</div>
<div class="t" style="left:745px;top:446.74px;height:20px;line-height:20px;font-size:12.3px;">als Inventurliste (gruppiert)</div>
<div class="t" style="left:745px;top:476.74px;height:20px;line-height:20px;font-size:12.3px;">Barcode Etiketten (70x42,3)</div>
<div style="left:733px;top:419px;width:197px;height:1px;background:#a0a0a0"></div>
<div style="left:733px;top:420px;width:197px;height:1px;background:#ffffff"></div>
<div style="left:733px;top:470px;width:197px;height:1px;background:#a0a0a0"></div>
<div style="left:733px;top:471px;width:197px;height:1px;background:#ffffff"></div>
<div style="left:729px;top:567px;width:90px;height:69px;background:#f0f0f0;border:1px solid #a0a0a0;box-sizing:border-box"></div>
<div class="t" style="left:745px;top:570.74px;height:20px;line-height:20px;font-size:12.3px;">KGR</div>
<div class="t" style="left:745px;top:591.74px;height:20px;line-height:20px;font-size:12.3px;">23456</div>
<div class="t" style="left:745px;top:612.74px;height:20px;line-height:20px;font-size:12.3px;">1625</div>
</body></html>
